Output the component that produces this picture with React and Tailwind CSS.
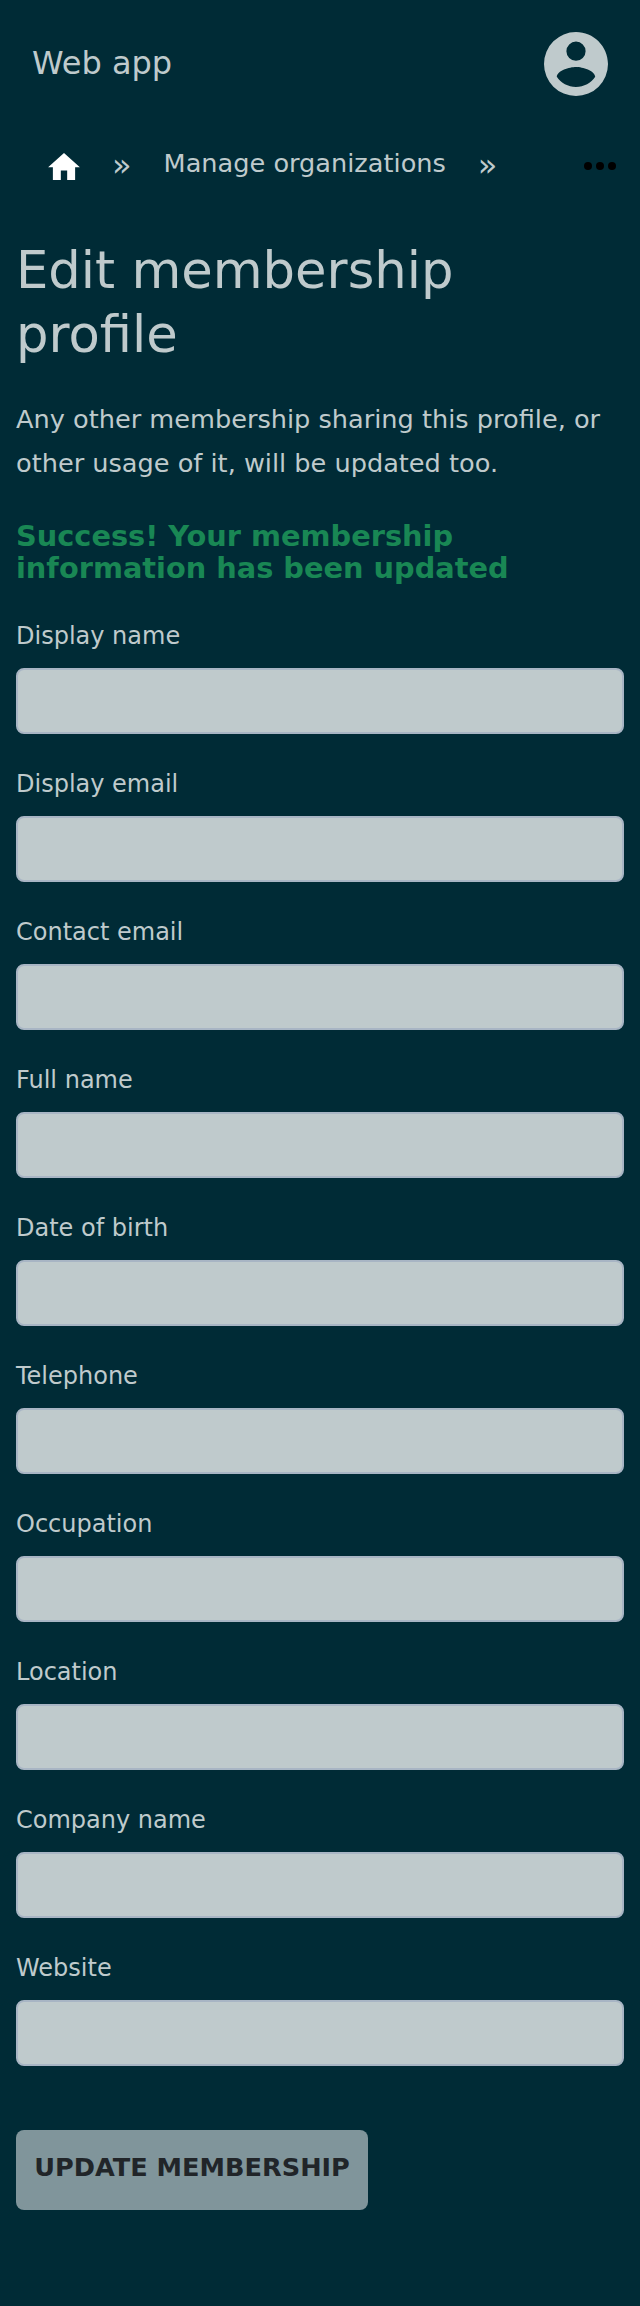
const fields = [
  'Display name',
  'Display email',
  'Contact email',
  'Full name',
  'Date of birth',
  'Telephone',
  'Occupation',
  'Location',
  'Company name',
  'Website',
];

function AccountIcon() {
  return (
    <svg viewBox="2 2 20 20" className="size-16" fill="currentColor">
      <path d="M12,19.2C9.5,19.2 7.29,17.92 6,16C6.03,14 10,12.9 12,12.9C14,12.9 17.97,14 18,16C16.71,17.92 14.5,19.2 12,19.2M12,5A3,3 0 0,1 15,8A3,3 0 0,1 12,11A3,3 0 0,1 9,8A3,3 0 0,1 12,5M12,2A10,10 0 0,0 2,12A10,10 0 0,0 12,22A10,10 0 0,0 22,12C22,6.47 17.5,2 12,2Z" />
    </svg>
  );
}

function HomeIcon() {
  return (
    <svg viewBox="2 3 20 17" className="h-[27px] w-8" fill="currentColor">
      <path d="M10,20V14H14V20H19V12H22L12,3L2,12H5V20H10Z" />
    </svg>
  );
}

function DotsIcon() {
  return (
    <svg viewBox="0 0 24 24" className="size-12" fill="currentColor">
      <circle cx="6" cy="12" r="2" />
      <circle cx="12" cy="12" r="2" />
      <circle cx="18" cy="12" r="2" />
    </svg>
  );
}

export default function App() {
  return (
    <div className="min-h-[2306px] w-full bg-[#002b36] font-['DejaVu_Sans',sans-serif] text-[#bfcacc]">
      <header className="flex h-32 items-center justify-between px-8">
        <a className="mb-0.5 text-[32px] leading-[38px]">Web app</a>
        <AccountIcon />
      </header>

      <nav className="flex h-[76px] items-center pr-4 pl-12">
        <a className="mt-px text-white"><HomeIcon /></a>
        <span className="mb-0.5 ml-8 text-[32px] leading-[38px]">»</span>
        <a className="mb-1.5 ml-8 text-[25.6px] leading-8">Manage organizations</a>
        <span className="mb-0.5 ml-8 text-[32px] leading-[38px]">»</span>
        <button className="ml-auto text-black"><DotsIcon /></button>
      </nav>

      <main className="px-4 pt-[34px]">
        <h1 className="text-[51.2px] leading-[64px]">Edit membership profile</h1>
        <p className="mt-[31px] text-[25.6px] leading-[44px]">
          Any other membership sharing this profile, or other usage of it, will be updated too.
        </p>
        <h2 className="mt-[35px] w-[540px] text-[28.8px] leading-8 font-bold text-[#198754]">
          Success! Your membership information has been updated
        </h2>
        <form className="mt-[34px]">
          {fields.map((label) => (
            <label key={label} className="mb-8 block">
              <span className="block h-[50px] text-[24px] leading-[36px]">{label}</span>
              <input className="block h-[66px] w-full rounded-lg border-2 border-[#a8b5c4] bg-[#bfcacc] px-4 text-[24px] text-[#212529]" />
            </label>
          ))}
          <button
            type="button"
            className="mt-16 flex h-20 w-[352px] justify-center rounded-lg bg-[#80959b] pt-[18px] text-[25.6px] leading-[38px] font-bold whitespace-nowrap text-[#212529]"
          >
            UPDATE MEMBERSHIP
          </button>
        </form>
      </main>
    </div>
  );
}
